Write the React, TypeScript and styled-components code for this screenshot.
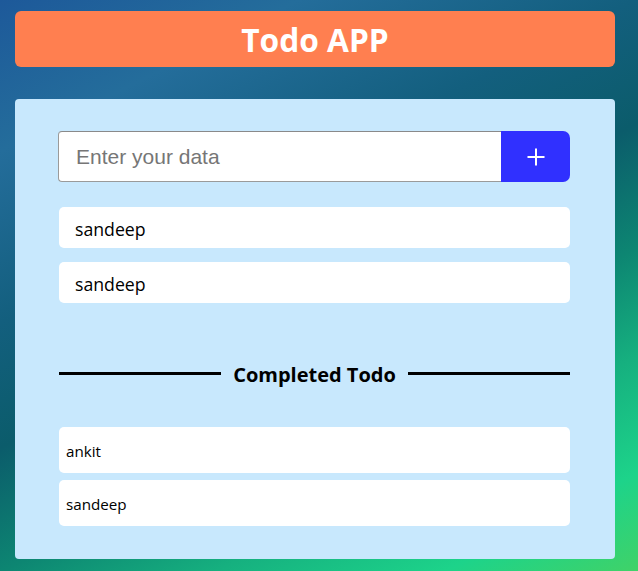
import React from "react";
import styled, { createGlobalStyle } from "styled-components";

const GlobalStyle = createGlobalStyle`
  html, body { margin: 0; padding: 0; }
  body { font-family: "Open Sans", "Noto Sans", sans-serif; }
  * { box-sizing: border-box; }
`;

const Page = styled.div`
  min-height: 100vh;
  padding: 11px 23px 12px 15px;
  background: linear-gradient(153deg, #1d599a 0%, #246d9b 17%, #135f7e 36%, #0b5c6b 50%, #0d8672 64%, #16b07f 76%, #1dd38a 89%, #40d268 100%);
  background-attachment: fixed;
`;

const Header = styled.h1`
  margin: 0 0 32px;
  height: 56px;
  display: flex;
  align-items: center;
  justify-content: center;
  background: #ff7f50;
  color: #fff;
  border-radius: 6px;
  font-family: "Open Sans", sans-serif;
  font-weight: 700;
  font-size: 31.7px;
`;

const Card = styled.div`
  background: #c8e8fd;
  border-radius: 4px;
  padding: 32px 45px 33px 44px;
  display: flex;
  flex-direction: column;
`;

const InputRow = styled.form`
  display: flex;
  height: 51px;
  margin: 0 0 25px -1px;
`;

const Input = styled.input`
  flex: 1;
  min-width: 0;
  height: 100%;
  border: 1px solid #9a9a9a;
  border-top-color: #8a8a8a;
  border-right: none;
  border-radius: 4px 0 0 4px;
  padding: 0 17px;
  font-family: "Liberation Sans", Arial, sans-serif;
  font-size: 21px;
  background: #fff;
  outline: none;
  &::placeholder { color: #767676; }
`;

const AddButton = styled.button`
  width: 69px;
  height: 100%;
  border: none;
  background: #3030ff;
  border-radius: 0 7px 7px 0;
  display: flex;
  align-items: center;
  justify-content: center;
  padding: 0;
  cursor: pointer;
`;

const List = styled.div<{ $gap: number }>`
  display: flex;
  flex-direction: column;
  gap: ${(p) => p.$gap}px;
`;

const Item = styled.div<{ $completed?: boolean }>`
  background: #fff;
  border-radius: 5px;
  display: flex;
  align-items: center;
  color: #000;
  font-family: "Open Sans", "Noto Sans", sans-serif;
  height: ${(p) => (p.$completed ? 46 : 41)}px;
  padding-left: ${(p) => (p.$completed ? 7 : 16)}px;
  padding-top: ${(p) => (p.$completed ? 1 : 3)}px;
  font-size: ${(p) => (p.$completed ? 15.2 : 17.7)}px;
`;

const Divider = styled.div`
  display: flex;
  align-items: center;
  gap: 12px;
  margin: 58px 0 42px;
  height: 24px;
  &::before, &::after {
    content: "";
    flex: 1;
    height: 3px;
    background: #000;
  }
`;

const DividerLabel = styled.span`
  font-family: "Open Sans", sans-serif;
  font-weight: 700;
  font-size: 20px;
  color: #000;
  padding-top: 2px;
`;

const PlusIcon = () => (
  <svg width="20" height="20" viewBox="0 0 20 20" aria-hidden="true">
    <path d="M10 1.5v17M1.5 10h17" stroke="#fff" strokeWidth="2" fill="none" />
  </svg>
);

const todos = ["sandeep", "sandeep"];
const completed = ["ankit", "sandeep"];

export default function App() {
  return (
    <>
      <GlobalStyle />
      <Page>
        <Header>Todo APP</Header>
        <Card>
          <InputRow onSubmit={(e) => e.preventDefault()}>
            <Input placeholder="Enter your data" />
            <AddButton type="submit" aria-label="Add">
              <PlusIcon />
            </AddButton>
          </InputRow>
          <List $gap={14}>
            {todos.map((t, i) => (
              <Item key={i}>{t}</Item>
            ))}
          </List>
          <Divider>
            <DividerLabel>Completed Todo</DividerLabel>
          </Divider>
          <List $gap={7}>
            {completed.map((t, i) => (
              <Item key={i} $completed>
                {t}
              </Item>
            ))}
          </List>
        </Card>
      </Page>
    </>
  );
}
